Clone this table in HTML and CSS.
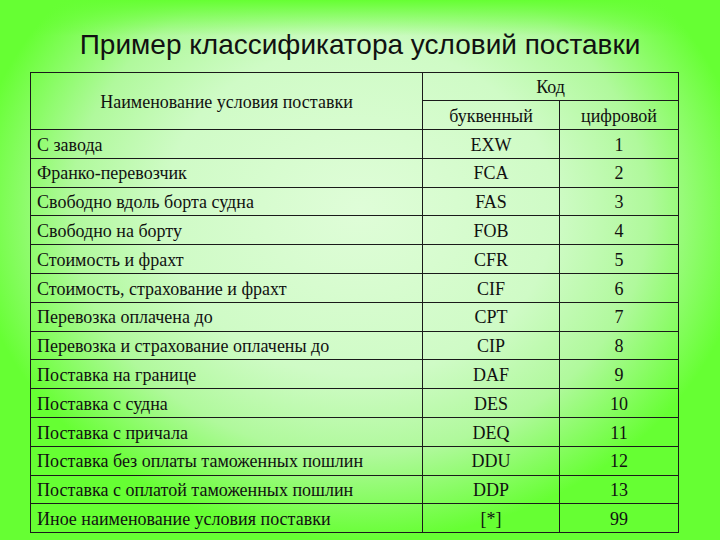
FILE: index.html
```html
<!DOCTYPE html>
<html lang="ru">
<head>
<meta charset="utf-8">
<link rel="stylesheet" href="styles.css">
</head>
<body>
<div class="slide">
  <h1 class="title">Пример классификатора условий поставки</h1>
  <table class="grid">
    <colgroup><col class="c1"><col class="c2"><col class="c3"></colgroup>
    <thead>
      <tr class="h1row"><th rowspan="2" class="name-h">Наименование условия поставки</th><th colspan="2">Код</th></tr>
      <tr class="h2row"><th>буквенный</th><th>цифровой</th></tr>
    </thead>
    <tbody>
      <tr><td>С завода</td><td>EXW</td><td>1</td></tr>
      <tr><td>Франко-перевозчик</td><td>FCA</td><td>2</td></tr>
      <tr><td>Свободно вдоль борта судна</td><td>FAS</td><td>3</td></tr>
      <tr><td>Свободно на борту</td><td>FOB</td><td>4</td></tr>
      <tr><td>Стоимость и фрахт</td><td>CFR</td><td>5</td></tr>
      <tr><td>Стоимость, страхование и фрахт</td><td>CIF</td><td>6</td></tr>
      <tr><td>Перевозка оплачена до</td><td>CPT</td><td>7</td></tr>
      <tr><td>Перевозка и страхование оплачены до</td><td>CIP</td><td>8</td></tr>
      <tr><td>Поставка на границе</td><td>DAF</td><td>9</td></tr>
      <tr><td>Поставка с судна</td><td>DES</td><td>10</td></tr>
      <tr><td>Поставка с причала</td><td>DEQ</td><td>11</td></tr>
      <tr><td>Поставка без оплаты таможенных пошлин</td><td>DDU</td><td>12</td></tr>
      <tr><td>Поставка с оплатой таможенных пошлин</td><td>DDP</td><td>13</td></tr>
      <tr><td>Иное наименование условия поставки</td><td>[*]</td><td>99</td></tr>
    </tbody>
  </table>
</div>
</body>
</html>
```
FILE: styles.css
```css
html, body {
  margin: 0;
  padding: 0;
}
body {
  width: 720px;
  height: 540px;
  overflow: hidden;
}
.slide {
  width: 720px;
  height: 540px;
  box-sizing: border-box;
  padding: 0 42px 0 30px;
  background:
    linear-gradient(to bottom, #66ff33 0px, rgba(102,255,51,0) 36px),
    radial-gradient(ellipse 390px 330px at 360px 210px, #dffdd8 0%, #cffbc6 50%, #b0f99c 74%, #66ff33 100%);
  display: flex;
  flex-direction: column;
}
.title {
  margin: 0;
  height: 72px;
  box-sizing: border-box;
  padding-top: 29px;
  font-family: "Liberation Sans", Arial, sans-serif;
  font-weight: normal;
  font-size: 28px;
  line-height: 31px;
  color: #111;
  text-align: center;
  width: 660px;
}
.grid {
  border-collapse: collapse;
  width: 649px;
  font-family: "Liberation Serif", "Times New Roman", serif;
  font-size: 18px;
  color: #111;
  table-layout: fixed;
}
.c1 { width: 392px; }
.c2 { width: 137px; }
.c3 { width: 119px; }
.grid th, .grid td {
  border: 1px solid #1a1a1a;
  padding: 0;
  font-weight: normal;
  vertical-align: middle;
  white-space: nowrap;
}
.h1row th { height: 25px; padding-top: 2px; }
.h2row th { height: 26px; padding-top: 2px; }
.name-h { text-align: center; }
.grid thead th { text-align: center; }
.grid td {
  height: 25.3px;
  padding-top: 2.5px;
  text-align: center;
}
.grid td:first-child {
  text-align: left;
  padding-left: 6px;
}
```
